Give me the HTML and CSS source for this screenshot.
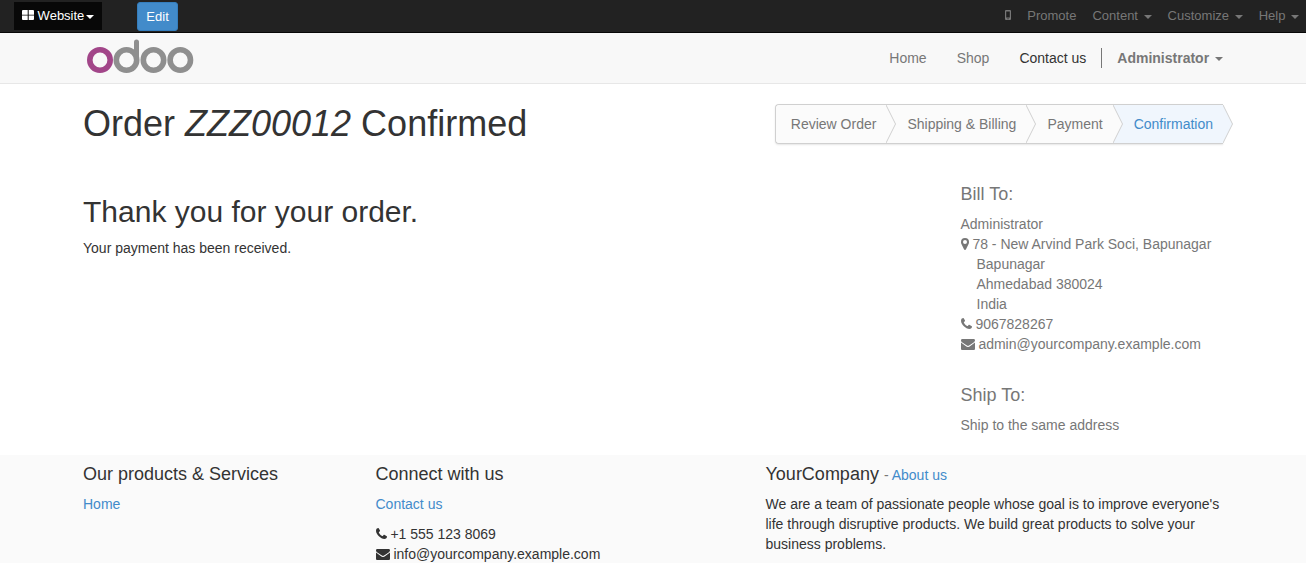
FILE: index.html
```html
<!DOCTYPE html>
<html lang="en">
<head>
    <meta charset="UTF-8">
    <meta name="viewport" content="width=device-width, initial-scale=1.0">
    <title>Order Confirmed | YourCompany</title>
    <link rel="stylesheet" href="styles.css">
</head>
<body>

    <!-- Shared icons -->
    <svg class="icon-defs" width="0" height="0" aria-hidden="true">
        <symbol id="icon-phone" viewBox="0 0 11 11">
            <path d="M11 8.6c0 .5-.2 1.300-.7 1.700-.5.400-1.200.7-1.900.7C6.500 11 4.500 9.800 2.900 8.200 1.200 6.500 0 4.500 0 2.700 0 1.900.3 1.200.8.6 1.200.2 1.900 0 2.400 0c.2 0 .4.300.6.700l1 1.900c.1.300 0 .5-.2.700l-.9.9c-.1.200-.1.300 0 .5.8 1.500 1.900 2.500 3.400 3.400.2.100.3.100.5-.1l.8-1c.2-.2.400-.3.700-.2l2.100 1.100c.3.200.6.300.6.700z"/>
        </symbol>
        <symbol id="icon-envelope" viewBox="0 0 14 11" preserveAspectRatio="none">
            <path d="M14 3.600v6.100c0 .7-.6 1.300-1.300 1.300H1.300C.6 11 0 10.400 0 9.700V3.600c1.500 1.200 3.200 2.200 4.700 3.400.7.500 1.500.9 2.300.9s1.600-.4 2.300-.9c1.500-1.100 3.200-2.200 4.700-3.400zM14 1.300c0 .9-.7 1.700-1.400 2.200L8.900 6.100C8.300 6.500 7.700 7 7 7s-1.300-.5-1.900-.9L1.400 3.500C.8 3 0 2.200 0 1.400 0 .6.5 0 1.300 0h11.400c.7 0 1.300.6 1.300 1.300z"/>
        </symbol>
        <symbol id="icon-marker" viewBox="0 0 8 12">
            <path fill-rule="evenodd" d="M4 0a4 4 0 0 1 4 4c0 .6-.1 1.200-.3 1.700L4.900 11.500c-.2.300-.5.500-.9.500s-.7-.2-.9-.5L.3 5.700C.1 5.200 0 4.600 0 4a4 4 0 0 1 4-4zm0 2a2 2 0 1 0 0 4 2 2 0 0 0 0-4z"/>
        </symbol>
        <symbol id="icon-chevron" viewBox="0 0 11 40">
            <path class="chevron-fill" d="M0 1L9.500 20L0 39z"/>
            <path class="chevron-line" d="M0 1L9.500 20L0 39"/>
        </symbol>
    </svg>

    <nav class="editor-bar">
        <div class="editor-left">
            <button type="button" class="website-menu">
                <svg width="12" height="10" viewBox="0 0 12 10" aria-hidden="true">
                    <path d="M1 0h4.700v4.700H0V1q0-1 1-1zM6.700 0H11q1 0 1 1v3.700H6.700zM0 5.500h5.700V10H1q-1 0-1-1zM6.700 5.500H12V9q0 1-1 1H6.700z"/>
                </svg>
                Website<span class="caret"></span>
            </button>
            <button type="button" class="edit-button">Edit</button>
        </div>
        <div class="editor-right">
            <a href="#" aria-label="Mobile preview">
                <svg width="6" height="10" viewBox="0 0 6 10" aria-hidden="true">
                    <path fill-rule="evenodd" d="M1 0h4q1 0 1 1v8q0 1-1 1H1q-1 0-1-1V1q0-1 1-1zM1.200 1.500v6h3.600v-6zM2.500 8.200v1h1v-1z"/>
                </svg>
            </a>
            <a href="#">Promote</a>
            <a href="#">Content <span class="caret"></span></a>
            <a href="#">Customize <span class="caret"></span></a>
            <a href="#">Help <span class="caret"></span></a>
        </div>
    </nav>

    <header class="site-header">
        <div class="container header-inner">
            <a href="#" class="logo" aria-label="odoo">
                <svg width="112" height="50" viewBox="0 0 112 50" fill="none" stroke-width="5.600" aria-hidden="true">
                    <circle cx="17" cy="27" r="10.200" stroke="#a24689"/>
                    <g stroke="#8f8f8f">
                        <circle cx="43.500" cy="27" r="10.200"/>
                        <path d="M53.500 27V9" stroke-width="5" stroke-linecap="round"/>
                        <circle cx="70.500" cy="27" r="10.200"/>
                        <circle cx="97.300" cy="27" r="10.200"/>
                    </g>
                </svg>
            </a>
            <nav class="main-nav">
                <a href="#">Home</a>
                <a href="#">Shop</a>
                <a href="#" class="active">Contact us</a>
                <a href="#" class="user-menu"><b>Administrator</b> <span class="caret"></span></a>
            </nav>
        </div>
    </header>

    <main class="container">
        <div class="title-row">
            <h1>Order <em>ZZZ00012</em> Confirmed</h1>
            <ol class="wizard">
                <li>Review Order<svg class="chevron"><use href="#icon-chevron"/></svg></li>
                <li>Shipping &amp; Billing<svg class="chevron"><use href="#icon-chevron"/></svg></li>
                <li>Payment<svg class="chevron"><use href="#icon-chevron"/></svg></li>
                <li class="current">Confirmation<svg class="chevron"><use href="#icon-chevron"/></svg></li>
            </ol>
        </div>

        <div class="row order-row">
            <section class="thanks">
                <h2>Thank you for your order.</h2>
                <p>Your payment has been received.</p>
            </section>
            <aside class="addresses">
                <h4>Bill To:</h4>
                <address>
                    <div>Administrator</div>
                    <div><svg class="icon marker"><use href="#icon-marker"/></svg> 78 - New Arvind Park Soci, Bapunagar</div>
                    <div class="indent">Bapunagar<br>Ahmedabad 380024<br>India</div>
                    <div><svg class="icon phone"><use href="#icon-phone"/></svg> 9067828267</div>
                    <div><svg class="icon envelope"><use href="#icon-envelope"/></svg> admin@yourcompany.example.com</div>
                </address>
                <h4>Ship To:</h4>
                <p>Ship to the same address</p>
            </aside>
        </div>
    </main>

    <footer class="site-footer">
        <div class="container">
            <div class="row footer-row">
                <section>
                    <h4>Our products &amp; Services</h4>
                    <a href="#">Home</a>
                </section>
                <section>
                    <h4>Connect with us</h4>
                    <p><a href="#">Contact us</a></p>
                    <div><svg class="icon phone"><use href="#icon-phone"/></svg> +1 555 123 8069</div>
                    <div><svg class="icon envelope"><use href="#icon-envelope"/></svg> info@yourcompany.example.com</div>
                </section>
                <section>
                    <h4>YourCompany <small>- <a href="#">About us</a></small></h4>
                    <p>We are a team of passionate people whose goal is to improve everyone's life through disruptive products. We build great products to solve your business problems.</p>
                </section>
            </div>
        </div>
    </footer>

</body>
</html>
```
FILE: styles.css
```css
* {
    box-sizing: border-box;
}
body {
    margin: 0;
    background-color: #fff;
    color: #333;
    font-family: "Liberation Sans", Arial, sans-serif;
    font-size: 14px;
    line-height: 20px;
}
a {
    color: #428bca;
    text-decoration: none;
}
h1, h2, h4, p {
    margin: 0;
    font-weight: normal;
}
h1 {
    font-size: 36px;
    line-height: 40px;
}
h2 {
    margin-bottom: 10px;
    font-size: 30px;
    line-height: 33px;
}
h4 {
    margin-bottom: 10px;
    font-size: 18px;
    line-height: 20px;
}
.container {
    max-width: 1170px;
    margin: 0 auto;
    padding: 0 15px;
}
.row {
    display: grid;
    margin: 0 -15px;
}
.row > * {
    padding: 0 15px;
}
.icon-defs {
    position: absolute;
}
.icon {
    fill: currentColor;
    vertical-align: 0;
}
.marker {
    width: 8px;
    height: 12px;
    vertical-align: -1px;
}
.phone {
    width: 11px;
    height: 11px;
}
.envelope {
    width: 14px;
    height: 11px;
    vertical-align: -1px;
}
.caret {
    display: inline-block;
    margin-left: 2px;
    border-top: 4px solid;
    border-left: 4px solid transparent;
    border-right: 4px solid transparent;
    vertical-align: middle;
}

/* Editor bar */
.editor-bar {
    display: flex;
    justify-content: space-between;
    height: 33px;
    padding-left: 14px;
    background-color: #222;
    border-bottom: 1px solid #080808;
    font-size: 13px;
}
.editor-bar svg {
    fill: currentColor;
}
.editor-left {
    display: flex;
    align-items: flex-start;
    gap: 35px;
    padding-top: 2px;
}
.website-menu {
    height: 28px;
    padding: 0 8px;
    background-color: #080808;
    border: none;
    color: #fff;
    font: inherit;
}
.edit-button {
    height: 29px;
    padding: 0 8px;
    background-color: #428bca;
    border: 1px solid #357ebd;
    border-radius: 3px;
    color: #fff;
    font: inherit;
}
.editor-right {
    display: flex;
    align-items: center;
}
.editor-right a {
    padding: 0 8px;
    color: #777;
}
.editor-right a:last-child {
    padding-right: 7px;
}

/* Site header */
.site-header {
    background-color: #f8f8f8;
    border-bottom: 1px solid #e7e7e7;
}
.header-inner {
    display: flex;
    justify-content: space-between;
    align-items: center;
}
.logo svg {
    display: block;
}
.main-nav {
    display: flex;
}
.main-nav a {
    padding: 0 15px;
    color: #777;
}
.main-nav .active {
    color: #333;
}
.main-nav .user-menu {
    padding-right: 0;
    border-left: 1px solid #777;
}

/* Order title and checkout steps */
.title-row {
    display: flex;
    justify-content: space-between;
    align-items: flex-start;
    padding: 20px 0 40px;
}
.wizard {
    display: flex;
    margin: 0;
    padding: 0;
    background-color: #fbfbfb;
    border: 1px solid #d0d0d0;
    border-right: none;
    border-radius: 4px 0 0 4px;
    box-shadow: 0 1px 2px rgba(0, 0, 0, 0.1);
    color: #777;
    line-height: 38px;
    list-style: none;
}
.wizard li {
    position: relative;
    padding: 0 10px 0 21px;
    background-color: #fbfbfb;
}
.wizard li:first-child {
    padding-left: 15px;
    border-radius: 4px 0 0 4px;
}
.wizard .current {
    background-color: #f0f6fd;
    color: #428bca;
}
.chevron {
    position: absolute;
    top: -1px;
    left: 100%;
    z-index: 1;
    width: 11px;
    height: 40px;
    fill: #fbfbfb;
    stroke: #d0d0d0;
}
.current .chevron {
    fill: #f0f6fd;
}
.chevron-fill {
    stroke: none;
}
.chevron-line {
    fill: none;
}

/* Order details */
.order-row {
    grid-template-columns: 9fr 3fr;
    padding-bottom: 20px;
}
.thanks {
    padding-top: 11px;
}
.addresses {
    color: #777;
}
address {
    margin-bottom: 31px;
    font-style: normal;
}
.indent {
    padding-left: 16px;
}

/* Footer */
.site-footer {
    padding-top: 9px;
    background-color: #fafafa;
}
.footer-row {
    grid-template-columns: 3fr 4fr 5fr;
}
.footer-row p {
    margin-bottom: 10px;
}
.footer-row small {
    color: #777;
    font-size: 14px;
    line-height: 1;
}
```
